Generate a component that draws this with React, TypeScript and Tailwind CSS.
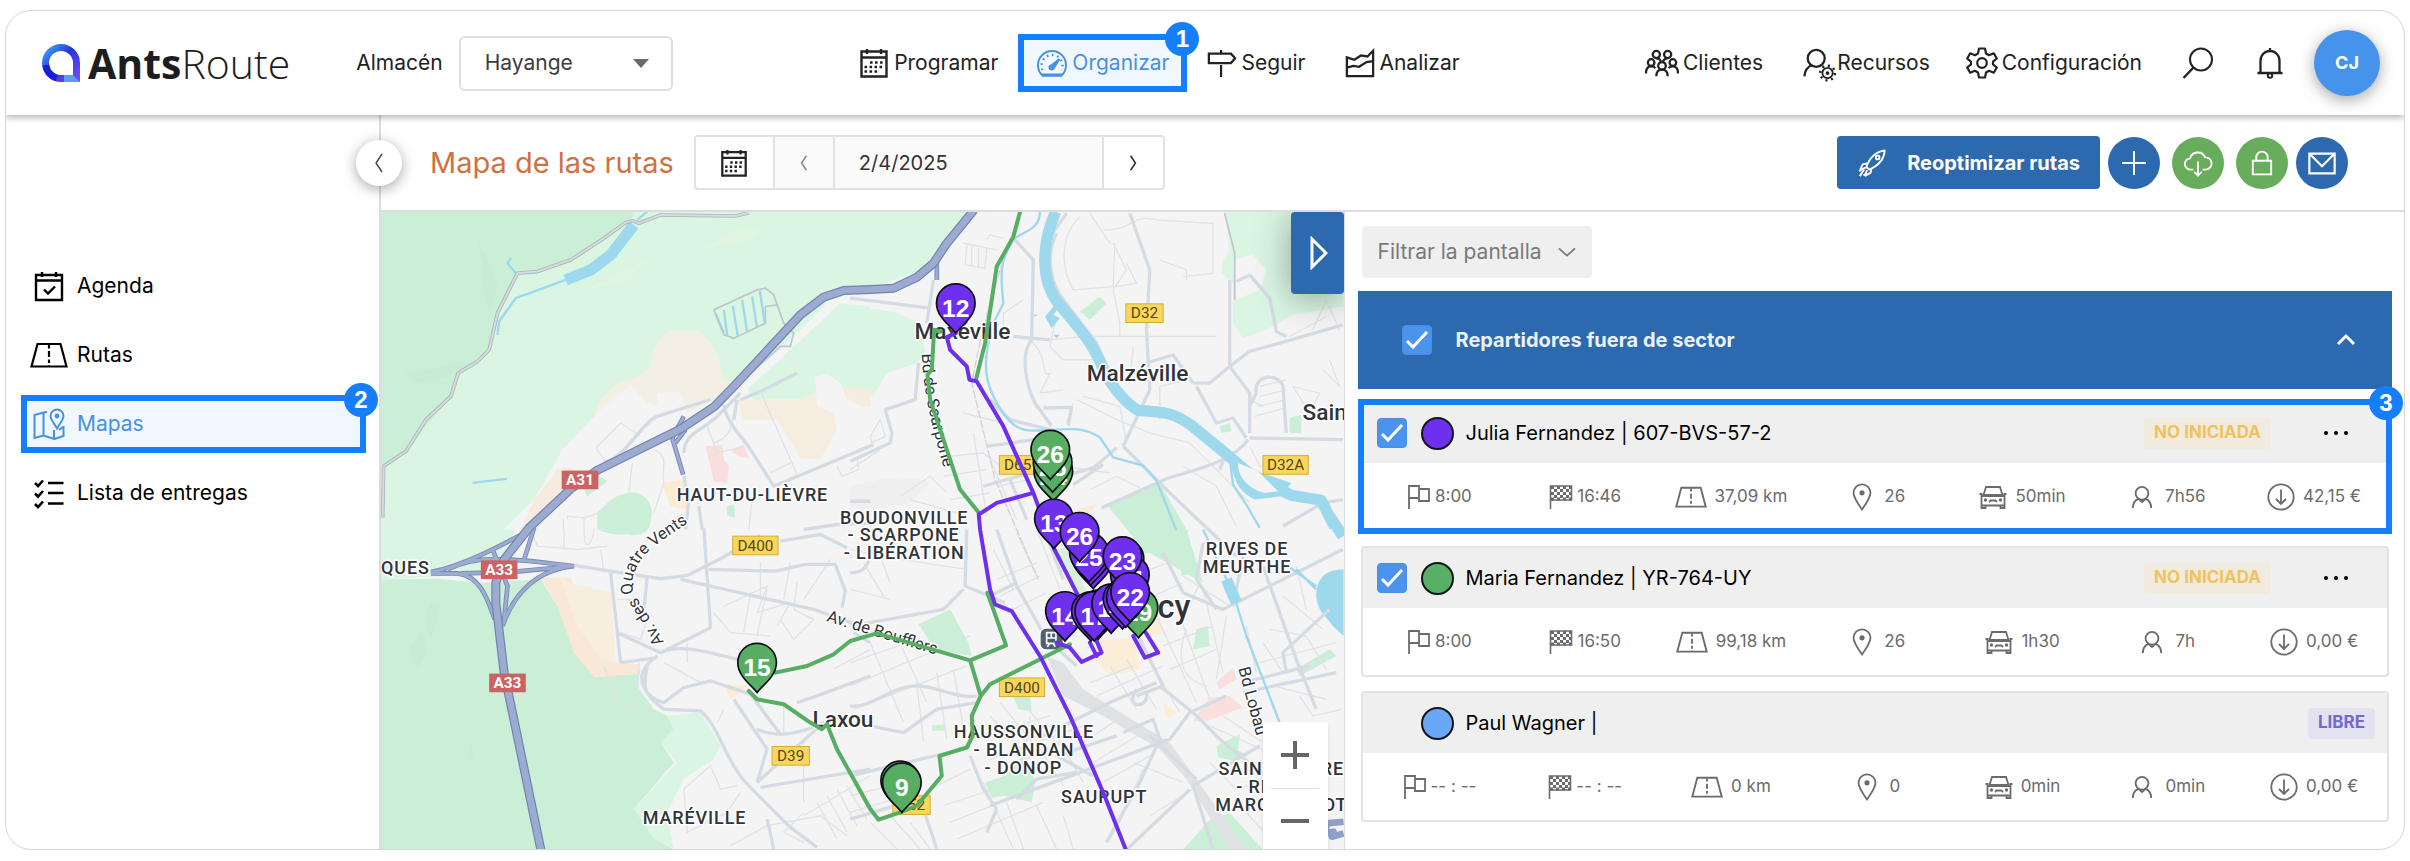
import React from "react";

type IconProps = { className?: string };

function Svg({ className, children, box = 32, w = 2 }: IconProps & { children: React.ReactNode; box?: number; w?: number }) {
  return (
    <svg viewBox={`0 0 ${box} ${box}`} className={"shrink-0 " + (className ?? "size-8")} fill="none" stroke="currentColor" strokeWidth={w} aria-hidden="true">
      {children}
    </svg>
  );
}

const CalendarIcon = ({ className }: IconProps) => (
  <Svg className={className}>
    <path d="M3.500 4.500h25v25h-25zM3.500 10.500h25M9 2v5M23 2v5" strokeWidth="2.400" />
    <path d="M12 15.500h14M6.500 20h19.500M6.500 24.500h14" strokeWidth="2.600" strokeDasharray="2.600 2.400" />
  </Svg>
);
const GaugeIcon = ({ className }: IconProps) => (
  <Svg className={className}>
    <path d="M6.500 28.500C3.500 26 2 22 2 18a14 14 0 0 1 28 0c0 4-1.500 8-4.500 10.500z" />
    <path d="M6 28h20" strokeWidth="3" />
    <path d="M14 19.500 23.500 12 17.500 21.500z" fill="currentColor" />
    <path d="M6.500 23a10.500 10.500 0 1 1 19 0" strokeWidth="2.400" strokeDasharray="1.600 3.600" />
    <circle cx="15.500" cy="20.500" r="2" />
  </Svg>
);
const SignIcon = ({ className }: IconProps) => (
  <Svg className={className}>
    <path d="M2 6h23.500L30 11l-4.500 5H2zM15 2v4M15 18v13" strokeWidth="2.400" />
  </Svg>
);
const ChartIcon = ({ className }: IconProps) => (
  <Svg className={className}>
    <path d="M2 10v20h28V3l-6 6-7-1-7 4.500zM2 21l7-2 6 1 8-5 7-1" strokeWidth="2.400" />
  </Svg>
);
const PeopleIcon = ({ className }: IconProps) => (
  <Svg className={className} box={36} w={2.4}>
    <circle cx="12" cy="9" r="3.800" />
    <circle cx="24" cy="9" r="3.800" />
    <circle cx="6.500" cy="17.500" r="3.500" />
    <circle cx="29.500" cy="17.500" r="3.500" />
    <circle cx="18" cy="21" r="4" />
    <path d="M1 29c0-5 2-7.500 5.500-7.500 2 0 3.500.500 4.500 2M35 29c0-5-2-7.500-5.500-7.500-2 0-3.500.500-4.500 2M12 32c0-4.500 2-7 6-7s6 2.500 6 7M12 13c2.500 0 4.500 1.500 5 4M24 13c-2.500 0-4.500 1.500-5 4" />
  </Svg>
);
const ResourceIcon = ({ className }: IconProps) => (
  <Svg className={className} box={36}>
    <circle cx="14" cy="11" r="9" strokeWidth="2.400" />
    <path d="M1.500 30c.500-6 3-10 8-12" strokeWidth="2.400" />
    <circle cx="26" cy="26.500" r="5.500" />
    <circle cx="26" cy="26.500" r="1" />
    <circle cx="26" cy="26.500" r="7.800" strokeWidth="2.600" strokeDasharray="2.200 3.930" />
  </Svg>
);
const GearIcon = ({ className }: IconProps) => (
  <Svg className={className} w={2.2}>
    <path d="M13 1.500h6l1 5 3 1.700 4.800-1.900 3 5.200-3.800 3.200v2.600l3.800 3.200-3 5.200-4.800-1.900-3 1.700-1 5h-6l-1-5-3-1.700-4.800 1.900-3-5.200 3.800-3.200v-2.600l-3.800-3.200 3-5.200L9 8.200l3-1.700z" strokeLinejoin="round" />
    <circle cx="16" cy="16" r="4.800" />
  </Svg>
);
const SearchIcon = ({ className }: IconProps) => (
  <Svg className={className}>
    <circle cx="19" cy="12.500" r="11" />
    <path d="M11.500 20.500 1.500 31" strokeWidth="2.400" />
  </Svg>
);
const BellIcon = ({ className }: IconProps) => (
  <Svg className={className}>
    <path d="M6.500 26V13.500a9.500 9.500 0 0 1 19 0V26M3.500 26h25M16 1v3" strokeWidth="2.300" />
    <circle cx="16" cy="28.500" r="2.200" />
  </Svg>
);
const AgendaIcon = ({ className }: IconProps) => (
  <Svg className={className}>
    <path d="M3 5h26v25H3zM3 10.500h26M9 2v5M23 2v5M11 19.500l4 4 7-7" strokeWidth="2.400" />
  </Svg>
);
const RoadIcon = ({ className }: IconProps) => (
  <Svg className={className} box={38}>
    <path d="M7.500 8h23l6 22.500h-35z" strokeWidth="2.200" />
    <path d="M19 9v21" strokeWidth="2.200" strokeDasharray="3.500 2.500 6 2.500" />
  </Svg>
);
const MapIcon = ({ className }: IconProps) => (
  <Svg className={className}>
    <path d="M14 4 10.500 4.500 1.500 7v23l9-2.500 11 3.500 9-3V18M10.500 4.500v23" />
    <path d="M24 20.500c-3-5.500-6.500-9-6.500-12.500a6.500 6.500 0 0 1 13 0c0 3.500-3.500 7-6.500 12.500zM21 22v8M26 22l4-3" />
    <circle cx="24" cy="8" r="1.400" fill="currentColor" />
  </Svg>
);
const ListIcon = ({ className }: IconProps) => (
  <Svg className={className}>
    <path d="M15 6h15.500M15 16h15.500M15 26.500h15.500" strokeWidth="2.400" />
    <path d="m2 6 3 3 5-5.500M2 16.500l3 3L10 14M2 27l3 3 5-5.500" strokeWidth="2.600" />
  </Svg>
);
const RocketIcon = ({ className }: IconProps) => (
  <Svg className={className} w={2}>
    <path d="M10 20C13 12 19 4 29.500 2.500 29 13 21 19.500 13 23zM11 16.500l-5 1-2.500 5.500 6-2M15.500 21.500l-1 5L9 29.500l1.500-6M7.500 23 3 30" strokeLinejoin="round" />
    <circle cx="22" cy="10" r="2" />
    <path d="m2.500 25 3-3M7 29.500l3-3" />
  </Svg>
);
const CloudIcon = ({ className }: IconProps) => (
  <Svg className={className}>
    <path d="M11 23H8.500a6 6 0 0 1-1-12A8.500 8.500 0 0 1 23.500 10a6.500 6.500 0 0 1 1 13H21M16 14.500V29M12 25.500l4 4 4-4" />
  </Svg>
);
const LockIcon = ({ className }: IconProps) => (
  <Svg className={className}>
    <path d="M5.500 13.500h21V29h-21zM9.500 13.500V9.500a6.500 6.500 0 0 1 13 0v4" strokeWidth="2.200" />
  </Svg>
);
const MailIcon = ({ className }: IconProps) => (
  <Svg className={className}>
    <path d="M2.500 6h27v21h-27zM3 6.500l13 13 13-13" strokeWidth="2.300" />
  </Svg>
);
const FlagIcon = ({ className }: IconProps) => (
  <Svg className={className} box={24}>
    <path d="M2 24V1h10v12H2M12 4h10v12H12z" strokeWidth="1.800" />
  </Svg>
);
const CheckeredIcon = ({ className }: IconProps) => (
  <Svg className={className} box={24}>
    <path d="M1.500 24V1h21v14h-21" strokeWidth="1.600" />
    <g strokeWidth="3" strokeDasharray="3 3">
      <path d="M2 2.500h20M2 8.500h20M2 14h20" />
      <path d="M5 5.500h18M5 11.500h18" />
    </g>
  </Svg>
);
const PinIcon = ({ className }: IconProps) => (
  <Svg className={className} box={28}>
    <path d="M14 26.500C9 19.500 5.500 14 5.500 9.800a8.500 8.500 0 0 1 17 0c0 4.200-3.500 9.700-8.500 16.700z" strokeWidth="1.800" />
    <circle cx="14" cy="9.800" r="1.600" fill="currentColor" />
  </Svg>
);
const CarIcon = ({ className }: IconProps) => (
  <Svg className={className} box={28} w={1.8}>
    <path d="M4.500 12 7 4h14l2.500 8M2.500 13h23v12h-4v-2.500h-15V25h-4zM.500 11h3M24.500 11h3M4 12h20M2.500 22.500h23M10 19l1.500-1.500h5L18 19" />
    <circle cx="6.500" cy="17" r=".8" />
    <circle cx="21.500" cy="17" r=".8" />
  </Svg>
);
const PersonIcon = ({ className }: IconProps) => (
  <Svg className={className} box={24}>
    <circle cx="12" cy="8" r="7" strokeWidth="2" />
    <path d="M2 24c0-5 2.500-8.500 6-10l4 3.500 4-3.500c3.500 1.500 6 5 6 10" strokeWidth="2" />
  </Svg>
);
const DownCircleIcon = ({ className }: IconProps) => (
  <Svg className={className} box={28}>
    <circle cx="14" cy="14" r="12.700" strokeWidth="1.800" />
    <path d="M14 6.500v14M9 16l5 5 5-5" strokeWidth="1.800" />
  </Svg>
);

function Chevron({ dir, className }: { dir: "left" | "right" | "down" | "up"; className: string }) {
  const d = { left: "M13 1 7 10l6 9", right: "M7 1l6 9-6 9", down: "M1 6l9 8 9-8", up: "M2 14l8-8 8 8" }[dir];
  return (
    <svg viewBox="0 0 20 20" className={className} fill="none" stroke="currentColor" aria-hidden="true">
      <path d={d} />
    </svg>
  );
}

function StepBadge({ n, className }: { n: number; className: string }) {
  return (
    <span className={"absolute z-10 flex size-[34px] items-center justify-center rounded-full bg-[#157efb] font-['Liberation_Sans',sans-serif] text-2xl font-bold leading-none text-white " + className}>
      {n}
    </span>
  );
}

function NavItem({ icon, label }: { icon: React.ReactNode; label: string }) {
  return (
    <a href="#" className="flex items-center gap-1">
      {icon}
      {label}
    </a>
  );
}

function Header() {
  return (
    <header className="relative z-20 flex h-[104px] items-center justify-between rounded-t-3xl pr-6 pl-9 text-[21px] whitespace-nowrap shadow-[0_3px_6px_rgba(0,0,0,0.28)]">
      <div className="flex items-center">
        <a href="#" className="flex items-end gap-2">
          <svg viewBox="0 0 38 38" className="mb-2 size-[38px]" fill="none" aria-hidden="true">
            <defs>
              <linearGradient id="ring" x1="0" y1="0" x2="1" y2="1">
                <stop offset="0" stopColor="#3fa5f5" />
                <stop offset="0.450" stopColor="#2536dd" />
                <stop offset="1" stopColor="#6c4cf0" />
              </linearGradient>
            </defs>
            <path d="M34.500 34.500H19A15.500 15.500 0 1 1 34.500 19z" stroke="url(#ring)" strokeWidth="7" />
            <path d="M3.800 21a15.500 15.500 0 0 0 11 13" stroke="#1a1fd0" strokeWidth="6.500" />
            <path d="M22 31h9l7 7H22z" fill="#5a9cf7" />
          </svg>
          <span className="font-['Open_Sans',sans-serif] text-[41px] leading-[54px] text-[#1d1d1f]">
            <b className="font-bold">Ants</b>
            <span className="font-light">Route</span>
          </span>
        </a>
        <label htmlFor="warehouse" className="ml-[66px]">
          Almacén
        </label>
        <div className="ml-4 grid w-[214px] items-center">
          <select id="warehouse" className="col-start-1 row-start-1 h-[55px] appearance-none rounded-md border-2 border-[#dedede] bg-white px-6 text-[#3c3c3c]">
            <option>Hayange</option>
          </select>
          <svg viewBox="0 0 16 9" className="pointer-events-none col-start-1 row-start-1 mr-6 h-[9px] w-4 justify-self-end" aria-hidden="true">
            <path d="M0 0h16L8 9z" fill="#6a6a6a" />
          </svg>
        </div>
      </div>

      <nav className="flex items-center" aria-label="Principal">
        <NavItem icon={<CalendarIcon className="size-8" />} label="Programar" />
        <div className="relative ml-5">
          <a href="#" aria-current="page" className="flex h-[58px] items-center gap-1 border-[6px] border-[#157efb] bg-[#f0f7fe] pr-3 pl-3 text-[#4a90e2]">
            <GaugeIcon className="size-8" />
            Organizar
          </a>
          <StepBadge n={1} className="-top-3 -right-3" />
        </div>
        <div className="ml-5">
          <NavItem icon={<SignIcon className="size-[30px]" />} label="Seguir" />
        </div>
        <div className="ml-10">
          <NavItem icon={<ChartIcon className="size-[30px]" />} label="Analizar" />
        </div>
      </nav>

      <div className="flex items-center">
        <NavItem icon={<PeopleIcon className="size-[34px]" />} label="Clientes" />
        <div className="ml-10">
          <a href="#" className="flex items-center">
            <ResourceIcon className="mt-1 size-[34px]" />
            Recursos
          </a>
        </div>
        <div className="ml-9">
          <NavItem icon={<GearIcon className="size-8" />} label="Configuración" />
        </div>
        <button type="button" aria-label="Buscar" className="ml-10">
          <SearchIcon className="size-8" />
        </button>
        <button type="button" aria-label="Notificaciones" className="ml-10">
          <BellIcon className="size-8" />
        </button>
        <button type="button" className="ml-7 size-[66px] rounded-full bg-[#4693ec] text-lg font-bold text-white shadow-[0_4px_16px_rgba(0,0,0,0.35)]">
          CJ
        </button>
      </div>
    </header>
  );
}

function Sidebar() {
  const row = "flex h-[58px] items-center gap-2 border-[6px] pl-0.5";
  return (
    <aside className="w-[375px] shrink-0 border-r-2 border-[#dcdcdc] pt-[142px] pr-[13px] pl-[15px] text-[21px]">
      <nav className="flex flex-col gap-[11px] text-black" aria-label="Organizar">
        <a href="#" className={row + " border-transparent"}>
          <span className="flex w-10 justify-center"><AgendaIcon className="size-8" /></span>
          Agenda
        </a>
        <a href="#" className={row + " border-transparent"}>
          <span className="flex w-10 justify-center"><RoadIcon className="size-[38px]" /></span>
          Rutas
        </a>
        <div className="relative">
          <a href="#" aria-current="page" className={row + " border-[#157efb] bg-[#f0f7fe] text-[#4a90e2]"}>
            <span className="flex w-10 justify-center"><MapIcon className="size-8" /></span>
            Mapas
          </a>
          <StepBadge n={2} className="-top-3 -right-3" />
        </div>
        <a href="#" className={row + " border-transparent"}>
          <span className="flex w-10 justify-center"><ListIcon className="size-8" /></span>
          Lista de entregas
        </a>
      </nav>
    </aside>
  );
}

function RoundButton({ label, className, children }: { label: string; className: string; children: React.ReactNode }) {
  return (
    <button type="button" aria-label={label} className={"flex size-[52px] items-center justify-center rounded-full text-white " + className}>
      {children}
    </button>
  );
}

function Toolbar() {
  return (
    <div className="relative flex h-[97px] items-center border-b-2 border-[#dcdcdc] pr-14 pl-[49px] whitespace-nowrap">
      <button type="button" aria-label="Ocultar menú" className="absolute top-[25px] -left-[25px] z-10 flex size-[46px] items-center justify-center rounded-full bg-white text-[#4a4a4a] shadow-[0_3px_14px_rgba(0,0,0,0.35)]">
        <Chevron dir="left" className="size-5 stroke-[1.5]" />
      </button>
      <h1 className="text-[29px] text-[#cf7140]">Mapa de las rutas</h1>
      <div className="ml-5 flex h-[55px] w-[471px] rounded border-2 border-[#e2e2e2] text-xl">
        <button type="button" aria-label="Calendario" className="flex w-[77px] items-center justify-center">
          <CalendarIcon className="size-[30px]" />
        </button>
        <button type="button" aria-label="Día anterior" className="flex w-[62px] items-center justify-center border-x-2 border-[#e2e2e2] bg-[#fafafa] text-[#8a8a8a]">
          <Chevron dir="left" className="size-4 stroke-2" />
        </button>
        <input aria-label="Fecha" type="text" defaultValue="2/4/2025" className="min-w-0 flex-1 bg-[#fafafa] px-6 text-[#333]" />
        <button type="button" aria-label="Día siguiente" className="flex w-[61px] items-center justify-center border-l-2 border-[#e2e2e2] text-[#333]">
          <Chevron dir="right" className="size-4 stroke-2" />
        </button>
      </div>
      <div className="ml-auto flex items-center">
        <button type="button" className="flex h-[53px] items-center gap-5 rounded bg-[#2d69ae] px-5 text-xl font-bold text-white">
          <RocketIcon className="size-[30px]" />
          Reoptimizar rutas
        </button>
        <RoundButton label="Añadir" className="ml-2 bg-[#2d69ae]">
          <svg viewBox="0 0 24 24" className="size-6" stroke="currentColor" strokeWidth="2" aria-hidden="true"><path d="M12 0v24M0 12h24" /></svg>
        </RoundButton>
        <RoundButton label="Exportar" className="ml-3 bg-[#68ad5b]"><CloudIcon className="size-[30px]" /></RoundButton>
        <RoundButton label="Bloquear" className="ml-3 bg-[#68ad5b]"><LockIcon className="size-7" /></RoundButton>
        <RoundButton label="Enviar correo" className="ml-2 bg-[#2d69ae]"><MailIcon className="size-[30px]" /></RoundButton>
      </div>
    </div>
  );
}

/* ---------- Map ---------- */

/* The map is drawn in four tiles; each group shifts to the origin of its tile. */
const TILES = { nw: "translate(0 0)", ne: "translate(1440 0)", sw: "translate(0 990)", se: "translate(1440 990)" } as const;
type Tile = keyof typeof TILES;
const TILE_KEYS: Tile[] = ["nw", "ne", "sw", "se"];

const AREAS: Record<Tile, [string, string][]> = {
  nw: [
    ["#daf6e3", "M30 35H1820L1690 200 1500 265 1380 300 1240 440 1060 590 930 640 575 750 580 790 490 900 430 990 400 1120 30 1140z"],
    ["#daf6e3", "M1130 570 1410 310 1500 320V575L1390 560 1340 575 1290 600H1150z"],
    ["#f4efe4", "M670 650 690 600 740 550 800 530 840 500 850 440 890 395H990L1030 440 1060 530 1090 555 950 650 700 760 575 750z"],
    ["#f4f4f5", "M575 750 700 620 780 555 830 610 860 620V580L930 575 950 640 1030 600 990 680 700 990H400L490 900z"],
    ["#f7ebe0", "M490 900 560 810 590 800 640 830 560 890 450 990z"],
    ["#f5ede0", "M1100 600H1290L1340 575 1400 560 1500 570V620L1390 640 1400 690 1350 780 1290 775 1220 660 1120 660z"],
    ["#f4f4f5", "M1335 530 1370 522 1410 550 1430 600 1500 630V660L1390 640 1340 620z"],
    ["#cbeed6", "M30 35H790L780 65 600 180 500 215 440 220 380 340 355 450 260 520 240 590 105 755 30 800z"],
    ["#c7ebd3", "M310 90c20 60 60 110 70 170l-20 80c-40-60-10-150-50-250zM100 510c60 30 130-40 200-20l-60 40c-50 0-80 60-140-20z"],
    ["#e0f6e1", "M1000 145 1110 85 1190 80 1120 130zM640 270l190-90-60 60z"],
    ["#cbeed6", "M680 940c40-40 60-60 110-62 50 10 60 50 50 90-10 50-60 40-90 30l-70-10zM640 870l40-45 30 20-60 45zM1070 920l22-5 2 40-24-8z"],
    ["#f9dedd", "M1005 740 1055 735 1060 780 1075 800 1070 850 1030 845zM1080 755l40-20 15 40-30-5z"],
    ["#f9ecd0", "M875 850 945 840 950 930 900 920z"],
  ],
  ne: [
    ["#daf6e3", "M0 320 130 335 210 370 225 455 200 490 110 520 70 590 0 565z"],
    ["#f7ebe0", "M0 565 70 570 60 600 0 590z"],
    ["#daf6e3", "M1125 35H1482V320L1330 345 1250 390 1180 415 1150 370V250L1115 220 1120 180 1140 150z"],
    ["#f4f4f5", "M1150 180 1210 165 1250 210 1230 270 1160 300z"],
    ["#cbeed6", "M690 335 750 290 770 310 720 360zM1320 655 1355 645V700H1320zM1110 680l30-10 5 25-30 5z"],
    ["#cbeed6", "M770 915 930 850 1010 990 1060 1150 880 1050z"],
    ["#f9ecd0", "M680 930l60-15-40 50z"],
    ["#efeff0", "M0 860c80-20 160-40 240-10l-60 60c-80 10-130 30-180 10z"],
  ],
  sw: [
    ["#cbeed6", "M30 150 200 148 330 160 510 150 560 230 610 360 670 440 810 420 800 470 850 540 890 560 910 600 870 640 910 700 790 840 850 900 910 962H30z"],
    ["#daf6e3", "M890 560 990 550 1050 650 1030 690 940 750 890 850 910 962 850 930 790 840 920 700 870 640 910 600z"],
    ["#f9e8d8", "M510 145 600 145 660 320 740 400 810 405 800 435 670 445 610 370 560 230z"],
    ["#f8eedd", "M570 145 600 165 640 170 720 190 735 400 690 390 620 290z"],
    ["#c7ebd3", "M180 220l30 10-30 100-20-60zM115 360l40-60 10 70-30 50zM300 640l10 60-20-10z"],
    ["#cbeed6", "M680 0h130c-30 20-90 20-130 0z"],
    ["#f9ecd0", "M1060 465 1130 470 1080 510z"],
  ],
  se: [
    ["#cbeed6", "M840 0h175l-5 30-130 45zM205 285l95-45 55 100 10 40-110-20zM490 505l50-10 5 50-40-5zM405 760l60-20 60-70 30 90-10 60-80-20-40 5zM1100 650l70-35-5 50 30 10-40 20-50-10zM1030 360l10-60 35-10 5 60zM1340 420l100-60 20 20-110 60zM1000 962l80-90 60-20 100 110zM995 120l40-20v30l-40 10zM245 590l40-5v20h-40z"],
    ["#d9f0dc", "M620 60l30-10 110 250-60-50z"],
    ["#fae0dc", "M1100 460 1150 415 1160 450 1110 480zM1030 575 1080 505 1140 500 1180 535 1060 580z"],
    ["#fbeed8", "M740 330 850 330 870 420 780 440 745 400zM880 250l40-10 20 70-40 10zM940 520l40 30-30 20z"],
    ["#dfe1e3", "M590 380 640 400 700 480 780 530 960 640 1040 750 1190 962 1140 962 1010 750 930 660 760 560 640 500z"],
    ["#9ed8ec", "M1482 120c-60 0-80 30-82 80 5 50 30 60 50 90l32 30z"],
  ],
};

const MINOR: Record<Tile, string> = {
  nw: "M675 745l75-75 60 40M675 745l30 40M590 960v-10l50 5 90-30M578 960v30M640 955v35M785 790l-10 90M850 750c50 20 20 60 30 100l-30 90M1010 680l30 80 80-20M1030 730c60-20 50-60 60-90M1170 575l110 250M1200 820l60-30M1400 800l15 30 50-20-5-40M1140 910l60-30M1145 900l-10 90M700 800l60-30",
  ne: "M340 130l100 20M350 135l-5 60 60 10 5-60M365 140v55M385 145v55M410 120l10-15 40 10M690 50c-60 60-60 150-20 220l120-10 5-130M790 130l40 80-40 60M830 190l30 60-60 10M720 40l60 90M760 90c100 0 80-50 160-30l170 10v150l-90 10M930 180l80 30v30M790 270l20 100v40M600 420l100-10h400M620 350l-20 90 40 40h120M540 420c60 50 30 120 60 100l-30 60 70-10M520 300l-60 40v70M680 600l120 60 100 40 120 30 180 180M670 610l-20 60M700 590l110 30 20 110M850 440l-10 100M1010 540l-80 20v100M1200 600l40 20M1330 560l50 80 30-60zM1440 480l30 80-50-50M1230 560l80-20M1230 590l80-20M1225 620l85-20M1215 650l90-25M1320 410l110-60M1390 390l40-90 40 90M1200 740l30 60 150-20M1000 800l100 60 60 120M720 870l80-40 120 60M640 800l140 20M150 890l90-60 50 50M180 900l140 40M300 770l100-10 80 60M280 830l130-20M340 640l120 30M370 700l40 250M420 780l80 180M440 860l100-20M300 900l120-20M60 710l30-50 15 50-40 20zM0 810l90-60",
  sw: "M480 0l20 50 120 10 90-10M580 0v60M640 0c0 60 20 60 30 0M690 60l10 70M740 210h50l40 60-20 60-60-20M1060 230l130-60-30 80 100-30-40 70M1030 250l50 60 120 10M1140 190l-20 120M1190 180l-30 140M1280 160l-10 80 60 30-60 60-40-60M1170 100v110M1260 100l-20 110M1380 90l-80 120M700 410l50 140 50-20 5-130M950 340v60M880 400l110 60M1060 540l-20 40M1240 520v90M1390 420l110-60M940 780l80-70 30 70 50-10M940 780l10 130 120-60 40-60M1080 950l110-60 160-30 80 60M1300 700v120M1300 850l-60 60M1340 820l60 110M1370 800l60 110M1400 780l60 110M1430 770l60 100M1300 860l200-120M1240 910l60 30",
  se: "M0 60l90 20 30 80M0 180l120 30M40 100l60 100M150 90l200 30M430 60l60 120M440 150l120-50M450 200l120-60M470 250l120-60M500 10l60 130M560 0l70 180M0 400l200-70M0 470l360-150M60 340l100 240M140 320l90 200M10 540l340-130M200 460l20 180M260 430l30 200M310 420l30 180M420 560l120 130M450 520l130 160M490 490l140 160M540 560l-20 150M400 620l200-60M420 690l280-100M560 640l80 130M620 620l80 140M0 800l160-40M0 850l200-60M60 880l80 80M120 860l90 100M180 880l60 80M240 780l120-60M280 830l150-50M300 880l200-80M320 930l260-110M400 760l90 200M470 820l50 140M560 830l60 130M640 860l30 100M720 460l130-50M740 500l200-90M780 410l80 130M830 390l90 150M880 360l110 190M920 260l120 260M940 350l150-60M960 420l140-60M990 260l90 250M1060 180l60 250M1010 300c-30 80-20 150 60 170M1130 260l-30 190M1190 290l30 140M1000 140l140 90M1050 160l-40 90M700 640l120-80M730 700l150-90M760 760l140-80M800 900l80-180M850 700l150 60M900 860l130-80M1080 590l200 90M1120 560l120 80M1240 340l60 90 90-30M1260 300l110 20 60 100M1230 400l230-60M1300 200l120 100M1340 110l30 130M1270 470l160 40M1350 500l40 60 90-20M1080 700l80 80 100-30M1180 840l110 120M900 120l110-40M910 200l90-40",
};

const ROADS: Record<Tile, string> = {
  nw: "M700 790c70-20 110-120 160-140l160-50M1060 615c10 60 60 100 90 150l60 95 300-125M940 830l15 80M955 900l-10 90M985 920l10 70M1110 600l60-25 110-55M1100 600l-10 60M1300 990l100-15 100-5M940 760c0-60 60-70 100-110l70-70",
  ne: "M0 295l240 30M250 240l-20 130M495 120l55 60-5 240M545 420c-40 50-10 150 10 190l50 70M580 625l85-2-10 55M490 410l110 10M840 40l60 170-10 180 10 180-80 170M890 490l80-25 60 85M1030 550l50 0 60-50 0-260M1140 500l60 80v120M1140 500l60-45 90-25 190-55M1040 560l60 110 50-15 40 60M1200 620l20-40c-10-60 70-60 80-20l10 140M1200 715l280 5M1195 720c-40 60-150 90-240 115l-200 90M620 100c-40 80-10 160 20 200l100 130 80 180M650 40l-50 70M600 690l-120-30-60-60M205 490l-10 110-90 30 20 70-5 30-120 55M0 905h60M400 860l140-40M480 840l50 120M550 720l-140 20M820 740l140 140 200 190M800 745l-70 60-110 30M670 855l90-60M1130 760l-20 50M1480 900l-60 10-120 70M1200 225l-40 20M1200 225l60 70 20 100 30 15",
  sw: "M610 108l130 20 130 20 80-10 100-50 120-70M830 140l-10 100M720 130l30 270M740 310l130 60 150-75-20-300M930 150l400 90 170 60M1015 120l200 5 90-20 90 0 30 80-10 50M1230 35l120-20 80 40M870 370c60-30 150 0 270 30M750 400l110-15M860 380c-90 60-30 130 20 140l60-45 80-20 120 40 90 120M830 410c-10 60-20 80 50 130l110 5c60 50 70 150 150 230l120 120 80 60M1090 510l100 150-30 100M1160 600c60 30 140 10 200-20M1160 760l200-180M1170 775l330-55M1190 870l20 90M1280 520l60-20 160-60M1500 340l-50-30",
  se: "M0 130c30 0 60-10 60-70M0 290l280-50 60-60M350 0l-5 170 120 50M420 200l80-40M440 0l60 170 90 160 90 80M0 530c60 10 120-60 200-60 60 0 120 40 180 30M60 590l100 20 100-70 120-20M0 740l360-85M360 680l40 100 40 60M0 870l200-60M220 840l40 120M420 830l540-200 60-80 110-50M440 840l-30 70M580 620l200-100 140-60M860 500l80-30-90-180M590 20l50 130M940 70l60 120 120 50 240-120 120-60M1060 40l-20 110 60 90M1180 80l-30 150M930 470l100 80 80 80 200 160M820 610l90-40 20 60-60 130-100 180M900 620l140 130M1030 770l200-120M1180 460l200-50M1310 430l-10-60 140-130M1240 110l100 280 60 150M1180 490l280-60M800 620l-180 60 110 60M680 730l-120 20-60 60M860 480c-40 60 40 60 30 10M1030 770l60 190M830 962l190-180",
};

const WATER_WIDE: Record<Tile, string> = {
  nw: "M790 75l-70 90-60 45-75 30",
  ne: "M617 35C575 130 570 240 625 310 700 400 730 430 765 520c30 50 60 90 100 112 90 5 110 10 160 45l110 90c60 50 60 60 130 90l60 30 90 15 40 80",
  sw: "",
  se: "M1130 150l30 70M1440 -40l40 60",
};
const WATER_THIN: Record<Tile, string> = {
  nw: "M585 240l-150 55-50 70-5 40M420 175l-10 15 25 30M800 60l30-25M305 850l103-12M1060 330l10 75M1087 318l15 90M1115 300l15 95M1145 290l15 95M1168 272l15 95M1035 340l25 60",
  ne: "M570 35c0 60-60 60-80 85-40 60-40 100-30 190l-30 60c-30 100-30 160 0 220 30 60 60 100 110 103 90 0 150-20 210 20l40 60 90 25 40 45 60 150M1140 775l10 80 40 60 40 70",
  sw: "",
  se: "M1060 0l90 190 40 130 100 260M1340 120l60 60M1300 100l100 70",
};

const MOTORWAYS = [
  "M512 1960 400 1420 375 1210V1150L400 1080 475 985 600 868 680 812 930 688 1030 622 1100 550 1290 345 1360 292 1420 272 1500 269 1570 265 1640 232 1690 190 1730 130 1812 30",
];
const RAMPS =
  "M180 1118C270 1100 370 1050 480 990M180 1122H260C330 1130 350 1200 372 1260M230 1110C330 1060 430 1080 610 1100M270 1122 420 1118 610 1100M610 1100C500 1110 430 1180 395 1280M365 1050 410 1160 400 1260M460 1080 490 985M940 650 905 715 938 825M945 690 915 730M1700 190V240";

const SHIELDS: [number, number, string, "red" | "yellow"][] = [
  [573, 813, "A31", "red"],
  [330, 1083, "A33", "red"],
  [355, 1423, "A33", "red"],
  [2268, 312, "D32", "yellow"],
  [2680, 768, "D32A", "yellow"],
  [1888, 768, "D657", "yellow"],
  [1087, 1010, "D400", "yellow"],
  [1888, 1436, "D400", "yellow"],
  [1205, 1642, "D39", "yellow"],
  [1568, 1790, "D52", "yellow"],
];

const DISTRICTS: [number, number, string][] = [
  [1146, 903, "HAUT-DU-LIÈVRE"],
  [1602, 972, "BOUDONVILLE"],
  [1600, 1026, "- SCARPONE"],
  [1602, 1080, "- LIBÉRATION"],
  [2632, 1068, "RIVES DE"],
  [2632, 1121, "MEURTHE"],
  [972, 1875, "MARÉVILLE"],
  [1962, 1616, "HAUSSONVILLE"],
  [1962, 1670, "- BLANDAN"],
  [1960, 1724, "- DONOP"],
  [2203, 1812, "SAURUPT"],
  [2735, 1727, "SAINT-PIERRE"],
  [2735, 1781, "- RENÉ II -"],
  [2735, 1835, "MARCEL-BROT"],
];

const TOWNS: [number, number, string][] = [
  [1777, 418, "Maxéville"],
  [2303, 543, "Malzéville"],
  [2918, 662, "Saint-M"],
  [1418, 1582, "Laxou"],
];

const GREEN = "#57ae63";
const PURPLE = "#6e30ee";
const PINS: [number, number, string, string][] = [
  [1757, 400, "12", PURPLE],
  [2050, 905, "24", GREEN],
  [2048, 878, "25", GREEN],
  [2041, 840, "26", GREEN],
  [1160, 1480, "15", GREEN],
  [1590, 1834, "", GREEN],
  [1595, 1840, "9", GREEN],
  [2052, 1047, "13", PURPLE],
  [2306, 1315, "19", GREEN],
  [2170, 1168, "", PURPLE],
  [2162, 1158, "", PURPLE],
  [2157, 1148, "25", PURPLE],
  [2129, 1087, "26", PURPLE],
  [2264, 1168, "", GREEN],
  [2280, 1216, "24", PURPLE],
  [2258, 1160, "23", PURPLE],
  [2085, 1325, "14", PURPLE],
  [2185, 1320, "", PURPLE],
  [2163, 1325, "", PURPLE],
  [2173, 1325, "17", PURPLE],
  [2224, 1302, "18", PURPLE],
  [2258, 1289, "21", PURPLE],
  [2268, 1284, "", PURPLE],
  [2281, 1268, "22", PURPLE],
];

function CityMap() {
  return (
    <svg viewBox="30 36 2892 1914" preserveAspectRatio="xMidYMid slice" className="absolute inset-0 size-full" role="img" aria-label="Mapa de las rutas">
      <rect x="0" y="0" width="3000" height="2000" fill="#f4f4f5" />
      {TILE_KEYS.map((k) => (
        <g key={k} transform={TILES[k]}>
          {AREAS[k].map(([fill, d]) => (
            <path key={d} d={d} fill={fill} />
          ))}
        </g>
      ))}
      {TILE_KEYS.map((k) => (
        <g key={k} transform={TILES[k]} fill="none" strokeLinejoin="round">
          <path d={MINOR[k]} stroke="#dfe2e6" strokeWidth="4" />
          <path d={ROADS[k]} stroke="#d5dbe2" strokeWidth="10" />
          <path d={WATER_WIDE[k]} stroke="#9ed8ec" strokeWidth="34" />
          <path d={WATER_THIN[k]} stroke="#9ed8ec" strokeWidth="7" />
        </g>
      ))}
      <path d="M2575 770c20 60 20 100 80 130l80-10 30-40-90-30z" fill="#9ed8ec" />
      <path d="M2605 790c0 50 40 80 80 90l40-5-60-60z" fill="#f4f4f5" />
      <path d="M2025 350l30-35 10 10-15 20 20 10-25 30zM2050 405h20l-10 10zM1990 345h15l-10 6z" fill="#9ed8ec" />
      <g fill="none" strokeLinejoin="round">
        <path d="M35 955 38 800 105 755 165 660 240 590 262 520 320 485 355 450 380 340 440 220 500 215 600 180 700 115 765 68 785 62 805 70 870 45 1095 48 1135 38" stroke="#a9b4bb" strokeWidth="11" />
        <path d="M35 955 38 800 105 755 165 660 240 590 262 520 320 485 355 450 380 340 440 220 500 215 600 180 700 115 765 68 785 62 805 70 870 45 1095 48 1135 38" stroke="#d4dcdc" strokeWidth="6" />
        <path d="M1030 330 1160 270 1185 265 1210 285 1240 370 1270 400 1260 440 1230 440 1130 530M1030 330l30 75 30 10 95-45v-50l35-5M2565 40l30 120v140" stroke="#bcc6cb" strokeWidth="5" />
        <path d="M1905 150c-20 100-60 180-100 400l70 290 130 300" stroke="#d0d3d7" strokeWidth="4" strokeDasharray="26 5" />
        <path d={RAMPS} stroke="#7487b3" strokeWidth="14" />
        <path d={RAMPS} stroke="#9cabcf" strokeWidth="9" />
        {MOTORWAYS.map((d) => (
          <React.Fragment key={d}>
            <path d={d} stroke="#7083af" strokeWidth="27" />
            <path d={d} stroke="#9cabcf" strokeWidth="20" />
          </React.Fragment>
        ))}
        <path d="M2922 1868l-50 5-5 30 25-5-5 15 35-10" stroke="#8fa0c8" strokeWidth="20" />
      </g>

      <g className="font-['Roboto',sans-serif]" fill="#303438" stroke="#ffffff" strokeWidth="9" strokeLinejoin="round" paintOrder="stroke" textAnchor="middle">
        <g fontSize="54" fontWeight="500" className="tracking-wider">
          {DISTRICTS.map(([x, y, t]) => (
            <text key={t} x={x} y={y}>{t}</text>
          ))}
          <text x="30" y="1125" textAnchor="start">QUES</text>
        </g>
        <g fontSize="68" fontWeight="500">
          {TOWNS.map(([x, y, t]) => (
            <text key={t} x={x} y={y}>{t}</text>
          ))}
        </g>
        <text x="2462" y="1255" fontSize="98" fontWeight="500" textAnchor="end">Nancy</text>
        <g fontSize="50" textAnchor="start">
          <path id="scarpone" d="M1655 462C1660 600 1690 700 1760 940" fill="none" stroke="none" />
          <text><textPath href="#scarpone">Bd de Scarpone</textPath></text>
          <path id="vents" d="M880 1328C800 1180 760 1180 800 1100 830 1040 900 1010 1010 930" fill="none" stroke="none" />
          <text><textPath href="#vents">Av. des Quatre Vents</textPath></text>
          <text transform="translate(1367 1265) rotate(17)">Av. de Boufflers</text>
          <text transform="translate(2606 1408) rotate(75)">Bd Lobau</text>
        </g>
      </g>

      <g className="font-['Roboto',sans-serif]" fontSize="46" textAnchor="middle">
        {SHIELDS.map(([x, y, t, kind]) => {
          const width = kind === "red" ? 110 : t.length > 3 ? 136 : 112;
          return (
            <g key={`${x}-${y}`}>
              <rect x={x} y={y} width={width} height="56" fill={kind === "red" ? "#cc6262" : "#fad75a"} stroke={kind === "red" ? "none" : "#d3ad33"} strokeWidth="3" />
              <text x={x + width / 2} y={y + 44} fill={kind === "red" ? "#fff" : "#54481a"} fontWeight={kind === "red" ? 700 : 400}>{t}</text>
            </g>
          );
        })}
      </g>

      <rect x="2010" y="1286" width="70" height="66" rx="18" fill="#4f6074" stroke="#fff" strokeWidth="4" />
      <path d="M2030 1300h28v32h-28zM2030 1316h28M2044 1300v16M2032 1342l6-8M2056 1342l-6-8" fill="none" stroke="#fff" strokeWidth="5" />

      <g fill="none" strokeWidth="12" strokeLinejoin="round" strokeLinecap="round">
        <path stroke={GREEN} d="M1950 36 1930 110 1880 200 1865 300 1845 430 1818 538M1712 395 1692 390 1685 510 1672 525 1680 600 1730 750 1770 870 1825 938M1852 1180 1908 1338 1800 1383 1520 1302 1440 1325 1390 1365 1310 1400 1215 1420M1800 1383 1832 1490M1135 1475 1160 1500 1240 1515 1320 1570 1355 1590 1370 1575 1400 1650 1500 1830 1525 1862 1590 1840 1640 1820 1715 1730 1708 1670 1790 1645 1808 1610 1805 1550 1832 1490 1860 1455 2000 1385 2100 1335" />
        <path stroke={PURPLE} d="M1757 400 1730 412 1740 450 1790 500 1798 540 1820 545 1900 680 1990 880 2052 1047 2125 1190M1990 880 1880 910 1826 945 1830 990 1860 1170 1875 1215 1925 1235 2010 1370 2100 1550 2200 1780 2268 1952M2060 1330 2100 1345 2135 1388 2195 1360 2178 1320M2160 1330 2180 1370M2290 1310 2325 1375 2365 1360 2328 1300" />
      </g>

      <g className="font-['Liberation_Sans',sans-serif]" fontSize="74" fontWeight="700" textAnchor="middle">
        {PINS.map(([x, y, t, color], i) => (
          <g key={i} transform={`translate(${x} ${y})`}>
            <path d="M0 0C-14-20-58-48-58-90A58 58 0 0 1 58-90C58-48 14-20 0 0Z" fill={color} stroke="#0c0c14" strokeWidth="5" />
            {t && <text y="-49" fill="#fff">{t}</text>}
          </g>
        ))}
      </g>
    </svg>
  );
}

function MapPane() {
  return (
    <section className="relative overflow-hidden border-r border-[#dcdcdc]" aria-label="Mapa">
      <CityMap />
      <button type="button" aria-label="Ampliar panel" className="absolute top-0 right-0 flex h-[82px] w-[53px] items-center justify-center rounded bg-[#2d69ae] shadow-[0_4px_36px_rgba(0,0,0,0.35)]">
        <svg viewBox="0 0 18 34" className="ml-1 h-[34px] w-[18px]" fill="none" stroke="#fff" strokeWidth="3" aria-hidden="true">
          <path d="M2 3l14 14L2 31z" />
        </svg>
      </button>
      <div className="absolute right-4 -bottom-1 flex w-[65px] flex-col items-center bg-white text-[#666] shadow-md">
        <button type="button" aria-label="Acercar" className="flex h-[66px] w-full items-center justify-center">
          <svg viewBox="0 0 28 28" className="size-7" stroke="currentColor" strokeWidth="4" aria-hidden="true"><path d="M14 0v28M0 14h28" /></svg>
        </button>
        <span className="h-px w-12 bg-[#e0e0e0]" />
        <button type="button" aria-label="Alejar" className="flex h-16 w-full items-center justify-center">
          <svg viewBox="0 0 28 28" className="size-7" stroke="currentColor" strokeWidth="4" aria-hidden="true"><path d="M0 14h28" /></svg>
        </button>
      </div>
    </section>
  );
}

/* ---------- Driver list ---------- */

function Check({ label }: { label: string }) {
  return (
    <span className="grid size-[30px] place-items-center">
      <input type="checkbox" defaultChecked aria-label={label} className="peer col-start-1 row-start-1 size-[30px] appearance-none rounded border border-[#4a90e2] bg-white checked:bg-[#4a94ee]" />
      <svg viewBox="0 0 24 24" className="pointer-events-none col-start-1 row-start-1 hidden size-6 peer-checked:block" fill="none" stroke="#fff" strokeWidth="3" aria-hidden="true">
        <path d="M2 13l6 6L22 4" />
      </svg>
    </span>
  );
}

type Driver = {
  name: string;
  color: string;
  status: string;
  assigned: boolean;
  highlighted?: boolean;
  stats: [string, string, string, string, string, string, string];
};

const DRIVERS: Driver[] = [
  { name: "Julia Fernandez | 607-BVS-57-2", color: "bg-[#6e30ee]", status: "NO INICIADA", assigned: true, highlighted: true, stats: ["8:00", "16:46", "37,09 km", "26", "50min", "7h56", "42,15 €"] },
  { name: "Maria Fernandez | YR-764-UY", color: "bg-[#57b065]", status: "NO INICIADA", assigned: true, stats: ["8:00", "16:50", "99,18 km", "26", "1h30", "7h", "0,00 €"] },
  { name: "Paul Wagner |", color: "bg-[#68a8f7]", status: "LIBRE", assigned: false, stats: ["-- : --", "-- : --", "0 km", "0", "0min", "0min", "0,00 €"] },
];

const STAT_ICONS = [
  { icon: <FlagIcon className="size-6" />, gap: "gap-1" },
  { icon: <CheckeredIcon className="size-6" />, gap: "gap-1" },
  { icon: <RoadIcon className="size-8" />, gap: "gap-2" },
  { icon: <PinIcon className="size-7" />, gap: "gap-2" },
  { icon: <CarIcon className="size-7" />, gap: "gap-2" },
  { icon: <PersonIcon className="size-[22px]" />, gap: "gap-3" },
  { icon: <DownCircleIcon className="size-7" />, gap: "gap-2" },
];

function DriverCard({ driver }: { driver: Driver }) {
  return (
    <li className="relative">
      <article className="overflow-hidden rounded border-2 border-[#e2e2e2] bg-white">
        <div className="flex h-[60px] items-center bg-[#efefef] pl-[14px] text-xl text-black">
          {driver.assigned ? <Check label={driver.name} /> : <span className="size-[30px]" />}
          <span className={"ml-[14px] size-[33px] rounded-full border-2 border-[#151515] " + driver.color} />
          <h3 className="ml-3">{driver.name}</h3>
          <span className={"ml-auto flex h-[31px] items-center rounded px-[10px] text-[17px] font-bold " + (driver.assigned ? "bg-[#f1ebdf] text-[#eec35c]" : "mr-3 bg-[#e3e2f0] text-[#7468d2]")}>
            {driver.status}
          </span>
          {driver.assigned && (
            <button type="button" aria-label="Más opciones" className="mr-[39px] ml-[53px]">
              <svg viewBox="0 0 24 4" className="h-1 w-6" aria-hidden="true">
                <circle cx="2" cy="2" r="2" />
                <circle cx="12" cy="2" r="2" />
                <circle cx="22" cy="2" r="2" />
              </svg>
            </button>
          )}
        </div>
        <ul className="grid h-[67px] grid-cols-7 items-center pl-1 text-[17px] text-[#6b6b6b]">
          {driver.stats.map((value, i) => (
            <li key={i} className={"flex items-center justify-center whitespace-nowrap " + STAT_ICONS[i].gap}>
              {STAT_ICONS[i].icon}
              {value}
            </li>
          ))}
        </ul>
      </article>
      {driver.highlighted && (
        <>
          <span className="pointer-events-none absolute -inset-x-[3px] -inset-y-[2px] border-[6px] border-[#157efb]" />
          <StepBadge n={3} className="-top-[15px] -right-[14px]" />
        </>
      )}
    </li>
  );
}

function DriverPanel() {
  return (
    <section className="flex flex-col pt-[14px] pr-3 pb-[27px] pl-[13px]" aria-label="Repartidores">
      <button type="button" className="ml-1 flex h-[52px] items-center gap-4 self-start rounded bg-[#efefef] px-4 text-[21px] text-[#7a7a7a]">
        Filtrar la pantalla
        <Chevron dir="down" className="size-[18px] stroke-2" />
      </button>
      <div className="mt-[13px] flex h-[98px] items-center bg-[#2d69ae] pr-9 pl-11 text-white">
        <Check label="Repartidores fuera de sector" />
        <h2 className="ml-6 text-xl font-bold text-[#eaf4ff]">Repartidores fuera de sector</h2>
        <button type="button" aria-label="Plegar" className="ml-auto">
          <Chevron dir="up" className="size-5 stroke-3" />
        </button>
      </div>
      <ul className="mt-3 flex flex-col gap-[14px] px-[3px]">
        {DRIVERS.map((d) => (
          <DriverCard key={d.name} driver={d} />
        ))}
      </ul>
    </section>
  );
}

export default function App() {
  return (
    <div className="bg-white px-[5px] py-[10px] font-['Inter','Noto_Sans',sans-serif] text-[#222]">
      <div className="overflow-hidden rounded-[26px] border border-[#d6d6d6] bg-white">
        <Header />
        <div className="flex">
          <Sidebar />
          <main className="min-w-0 flex-1">
            <Toolbar />
            <div className="grid grid-cols-[minmax(0,964fr)_minmax(0,1060fr)]">
              <MapPane />
              <DriverPanel />
            </div>
          </main>
        </div>
      </div>
    </div>
  );
}
